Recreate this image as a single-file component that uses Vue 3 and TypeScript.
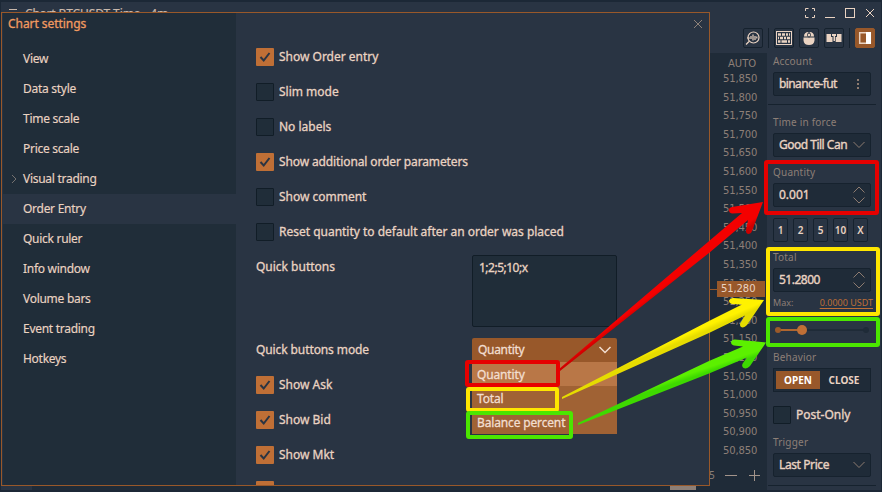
<script setup lang="ts">
type Row = { label: string; on: boolean }
const menu: string[] = ['View', 'Data style', 'Time scale', 'Price scale', 'Visual trading', 'Order Entry', 'Quick ruler', 'Info window', 'Volume bars', 'Event trading', 'Hotkeys']
const first: Row[] = [
  { label: 'Show Order entry', on: true },
  { label: 'Slim mode', on: false },
  { label: 'No labels', on: false },
  { label: 'Show additional order parameters', on: true },
  { label: 'Show comment', on: false },
  { label: 'Reset quantity to default after an order was placed', on: false },
]
const last: Row[] = [
  { label: 'Show Ask', on: true },
  { label: 'Show Bid', on: true },
  { label: 'Show Mkt', on: true },
  { label: '', on: true },
]
const options: string[] = ['Quantity', 'Total', 'Balance percent']
const prices: string[] = Array.from({ length: 21 }, (_, i) => (51850 - i * 50).toLocaleString('en-US'))
const quick: string[] = ['1', '2', '5', '10', 'X']
</script>

<template>
  <div class="window">
    <header class="titlebar">
      <div class="title"><span class="burger"></span>Chart BTCUSDT Time - 4m</div>
      <svg class="winbtns" width="76" height="14" viewBox="0 0 76 14" fill="none" stroke="#ead3c2" stroke-width="1">
        <path d="M1.500 5V2.500H4.500M8 2.500H10.500V5M10.500 9V11.500H8M4.500 11.500H1.500V9" />
        <path d="M21 11.500H31" /><rect x="41.500" y="2.500" width="9" height="9" />
        <path d="M62 3L70 11M70 3L62 11" />
      </svg>
    </header>
    <div class="body">
      <section class="chart">
        <div class="tools">
          <span class="tool"><svg width="18" height="18" viewBox="0 0 18 18" fill="none" stroke="#ead3c2" stroke-width="1.200"><circle cx="9.500" cy="8.500" r="5.500" /><path d="M5 12.500L2 15.500M7 7V10M9 5.500V11.500M11 7V11M12.800 7.500V9.500M3 9H6" /></svg></span>
          <i class="sep"></i>
          <span class="tool"><svg width="18" height="18" viewBox="0 0 18 18"><rect x="1.500" y="2.500" width="15" height="13" fill="none" stroke="#ead3c2" /><path d="M3 5.500H15M3 9H15M3 12.500H15" stroke="#ead3c2" stroke-width="2.500" /><path d="M6.500 4V7M10.500 4V7M13.500 4V7M4.500 7.500V11M8.500 7.500V11M11.500 7.500V11M6 11V14M12.500 11V14" stroke="#293443" /></svg></span>
          <span class="tool gap"><svg width="18" height="18" viewBox="0 0 18 18" fill="#ead3c2"><path d="M4 7.500Q4 3 8.500 3V7.500ZM9.500 7.500V3Q14 3 14 7.500ZM3.500 8.500H14.500V11.500Q14 16 9 16T3.500 11.500Z" /><rect x="7.500" y="4" width="3" height="4" rx="1.500" stroke="#293443" /></svg></span>
          <span class="tool gap"><svg width="18" height="18" viewBox="0 0 18 18" fill="#ead3c2"><path d="M1.500 5H6V8H7.500V13H1.500ZM7 5H11V7H10V12H8.500V7H7ZM12 5H16.500V13H10.700V8H12Z" /></svg></span>
          <i class="sep"></i>
          <span class="tool active"><svg width="18" height="18" viewBox="0 0 18 18"><path d="M3.700 3.700H14.300V14.300H3.700Z" fill="none" stroke="#ead3c2" stroke-width="1.500" /><path d="M10 3H15V15H10Z" fill="#fff" /></svg></span>
        </div>
        <div class="axis">
          <div class="auto">AUTO</div>
          <div class="prices"><span v-for="p in prices" :key="p">{{ p }}</span></div>
        </div>
        <div class="zoomer">
          <span class="clip">5</span>
          <svg width="42" height="14" viewBox="0 0 42 14" stroke="#a3948b" fill="none"><path d="M2 7.500H14M26 7.500H37M31.500 2V13" /></svg>
        </div>
        <i class="tick"></i>
        <div class="mark">51,280</div>
        <i class="foot"></i><i class="scroll"></i><i class="tab"></i>
      </section>
      <aside class="order">
        <label class="l-account">Account</label>
        <div class="field"><span class="t-acc">binance-fut</span><svg width="20" height="16" viewBox="0 0 20 16" fill="#8d7b70"><path d="M7 3h2v2h-2zM7 7h2v2h-2zM7 11h2v2h-2z" /></svg></div>
        <i class="rule"></i>
        <label class="l-tif">Time in force</label>
        <div class="field"><span class="t-good">Good Till Can</span><svg width="20" height="12" viewBox="0 0 20 12" fill="none" stroke="#8d7b70"><path d="M3.500 3L9 8.500L14.500 3" /></svg></div>
        <label class="l-qty">Quantity</label>
        <div class="field"><span>0.001</span><svg width="20" height="18" viewBox="0 0 20 18" fill="none" stroke="#8d7b70"><path d="M3.500 6.500L9 1L14.500 6.500M3.500 11.500L9 17L14.500 11.500" /></svg></div>
        <div class="quick"><b v-for="q in quick" :key="q">{{ q }}</b></div>
        <label class="l-total">Total</label>
        <div class="field"><span class="t-total">51.2800</span><svg width="20" height="18" viewBox="0 0 20 18" fill="none" stroke="#8d7b70"><path d="M3.500 6.500L9 1L14.500 6.500M3.500 11.500L9 17L14.500 11.500" /></svg></div>
        <div class="max"><span>Max:</span><u>0.0000 USDT</u></div>
        <svg class="slider" width="98" height="14" viewBox="0 0 98 14"><path d="M5 7H93" stroke="#1f2b38" stroke-width="2" /><path d="M5 7H29" stroke="#b0662f" stroke-width="2" /><circle cx="5" cy="7" r="3" fill="#9b5a2a" /><circle cx="93" cy="7" r="3" fill="#1f2b38" /><circle cx="29" cy="7" r="5" fill="#bf6f36" /></svg>
        <label class="l-beh">Behavior</label>
        <div class="toggle"><b class="sel">OPEN</b><b>CLOSE</b></div>
        <div class="post"><i class="box"></i><span>Post-Only</span></div>
        <label class="l-trig">Trigger</label>
        <div class="field"><span class="t-last">Last Price</span><svg width="20" height="12" viewBox="0 0 20 12" fill="none" stroke="#8d7b70"><path d="M3.500 3L9 8.500L14.500 3" /></svg></div>
        <i class="rule"></i>
      </aside>
    </div>

    <div class="dialog">
      <nav>
        <h1>Chart settings</h1>
        <div v-for="m in menu" :key="m" class="item" :class="{ current: m === 'Order Entry' }">
          <svg v-if="m === 'Visual trading'" class="chev" width="8" height="10" viewBox="0 0 8 10" fill="none" stroke="#75716f"><path d="M2 1L6 5L2 9" /></svg>
          <span>{{ m }}</span>
        </div>
      </nav>
      <main>
        <svg class="close" width="10" height="10" viewBox="0 0 10 10" stroke="#8d8179"><path d="M1 1L9 9M9 1L1 9" /></svg>
        <div v-for="r in first" :key="r.label" class="check"><i class="box" :class="{ on: r.on }"><svg v-if="r.on" width="18" height="18" viewBox="0 0 18 18" fill="none" stroke="#293443" stroke-width="2"><path d="M4.500 9L7.700 12.500L13.500 5" /></svg></i><span>{{ r.label }}</span></div>
        <div class="pair area"><span>Quick buttons</span><div class="textarea">1;2;5;10;x</div></div>
        <div class="pair mode"><span>Quick buttons mode</span>
          <div class="select">Quantity<svg width="14" height="10" viewBox="0 0 14 10" fill="none" stroke="#f2ded0" stroke-width="1.500"><path d="M1.500 2L7 7.500L12.500 2" /></svg>
            <div class="drop"><span v-for="o in options" :key="o">{{ o }}</span></div>
          </div>
        </div>
        <div v-for="r in last" :key="r.label" class="check"><i class="box" :class="{ on: r.on }"><svg v-if="r.on" width="18" height="18" viewBox="0 0 18 18" fill="none" stroke="#293443" stroke-width="2"><path d="M4.500 9L7.700 12.500L13.500 5" /></svg></i><span>{{ r.label }}</span></div>
      </main>
    </div>

    <svg class="notes" width="882" height="492" viewBox="0 0 882 492" fill="none">
      <defs>
        <linearGradient id="gr" gradientUnits="userSpaceOnUse" x1="650" y1="289" x2="659" y2="301"><stop offset=".4" stop-color="#f40000" /><stop offset=".7" stop-color="#ce0000" /></linearGradient>
        <linearGradient id="gy" gradientUnits="userSpaceOnUse" x1="658" y1="340" x2="664" y2="354"><stop offset=".4" stop-color="#fff200" /><stop offset=".7" stop-color="#e6dc00" /></linearGradient>
        <linearGradient id="gg" gradientUnits="userSpaceOnUse" x1="668" y1="374" x2="673" y2="389"><stop offset=".4" stop-color="#5cf000" /><stop offset=".7" stop-color="#3ed900" /></linearGradient>
      </defs>
      <path d="M559 369L742 213L732 213.500Q729 213 729 210Q729 207.500 732 207L763 202L752 231Q751 234 748 234Q745.500 233 746 230L748 220L709 253L560 371Z" fill="url(#gr)" />
      <path d="M562 397L709 321L742 304.500L732 304Q729 303 729 300.500Q730 298 733 298L764 300L747 325Q744 328.500 741 327Q739 325 741 322L745 315.500L709 333L562 399Z" fill="url(#gy)" />
      <path d="M578 423L709 361L743 346.500L734 345.500Q731 344.500 731 342Q732 339 735 339.500L766 342.500L750 366Q747 369.500 743.500 368Q741 366 743 363L747 357.500L709 373.500L578 425Z" fill="url(#gg)" />
      <rect x="467" y="362" width="91" height="23" rx="1" stroke="#e60000" stroke-width="4" />
      <rect x="468" y="389" width="89" height="21" rx="1" stroke="#ffe600" stroke-width="4" />
      <rect x="468" y="413" width="103" height="24" rx="1" stroke="#4be600" stroke-width="4" />
      <rect x="766" y="162" width="111" height="51" rx="1" stroke="#e60000" stroke-width="4" />
      <rect x="768" y="249" width="110" height="65" rx="1" stroke="#ffe600" stroke-width="4" />
      <rect x="768" y="319" width="110" height="26" rx="1" stroke="#4be600" stroke-width="4" />
    </svg>
  </div>
</template>

<style>
body { margin: 0; background: #fff; overflow: hidden; }
</style>
<style scoped>
* { box-sizing: border-box; }
i { display: block; font-style: normal; flex: none; }
svg { display: block; flex: none; }
.window { position: relative; width: 882px; height: 492px; overflow: hidden; background: #1c2836; padding: 2px 1px 2px 1px; font: 12px/16px "Noto Sans", sans-serif; color: #ead3c2; }
.titlebar { display: flex; justify-content: space-between; height: 24px; background: #293443; padding: 4px 1px 0 8px; }
.title { display: flex; gap: 8px; font-size: 12px; color: #c9b8ab; height: 20px; letter-spacing: -.1px; -webkit-text-stroke: .2px; }
.burger { width: 8px; height: 8px; margin-top: 3px; border-top: 1px solid #c9b8ab; border-bottom: 1px solid #c9b8ab; }
.body { display: flex; height: 464px; background: #293443; }
.chart { position: relative; width: 766px; height: 464px; display: flex; flex-direction: column; align-items: flex-end; flex: none; }
.tools { display: flex; align-items: center; width: 138px; margin-right: -114px; margin-bottom: 3px; height: 24px; flex: none; position: relative; z-index: 1; }
.tool { width: 20px; height: 20px; display: grid; place-items: center; border: 1px solid #16222e; border-radius: 2px; background: #293443; }
.tool.active { background: #98582a; border-color: #98582a; }
.sep { width: 1px; height: 20px; background: #16222e; margin: 0 5px; }
.gap { margin-left: 5px; }
.axis { width: 58px; height: 407px; background: #1f2b38; font: 10px/18.600px "DejaVu Sans", sans-serif; color: #8d7f77; flex: none; }
.auto { height: 17px; line-height: 22px; padding-left: 19px; }
.prices { display: flex; flex-direction: column; padding-left: 14px; letter-spacing: -.15px; }
.prices span { height: 18.600px; }
.zoomer { width: 58px; height: 30px; display: flex; align-items: center; background: #1f2b38; }
.clip { width: 14px; font-size: 10px; color: #8d7f77; }
.tick { position: absolute; left: 708px; top: 263px; width: 9px; height: 1px; background: #98582a; }
.mark { position: absolute; left: 716px; top: 255px; width: 48px; height: 16px; padding-left: 4px; background: #98582a; font: 10px/16px "DejaVu Sans", sans-serif; letter-spacing: -.1px; }
.foot { position: absolute; left: 0; top: 460px; width: 710px; height: 4px; background: #1f2b38; }
.scroll { position: absolute; left: 669px; top: 460px; width: 26px; height: 4px; background: #8d7f77; }
.tab { position: absolute; left: 0; top: 460px; width: 31px; height: 4px; background: #293443; }
.order { width: 114px; height: 464px; padding: 0 8px 0 6px; display: flex; flex-direction: column; flex: none; }
.order label { font-size: 10px; line-height: 13px; color: #8d7f77; height: 14px; flex: none; letter-spacing: .2px; }
.field { width: 98px; height: 24px; display: flex; align-items: center; justify-content: space-between; border: 1px solid #16222e; border-radius: 2px; background: #1f2b38; padding: 0 0 0 5px; flex: none; white-space: nowrap; font-size: 12px; -webkit-text-stroke: .35px; }
.t-acc { letter-spacing: -.6px; }
.t-good { letter-spacing: -.5px; }
.t-total { letter-spacing: -.5px; }
.t-last { letter-spacing: -.4px; }
.l-account { margin: 29px 0 3px; }
.rule { width: 108px; height: 1px; margin-left: -5px; background: #16222e; margin-top: 8px; }
.l-tif { margin: 11px 0 3px; }
.l-qty { margin: 9px 0 3px; }
.quick { display: flex; gap: 5px; margin-top: 11px; height: 24px; flex: none; }
.quick b { width: 15px; display: grid; place-items: center; border: 1px solid #16222e; border-radius: 2px; font-size: 10px; font-weight: 600; }
.l-total { margin: 9px 0 3px; }
.max { display: flex; justify-content: space-between; font-size: 9px; line-height: 14px; margin-top: 4px; height: 14px; color: #8d7f77; flex: none; }
.max u { color: #bf6f36; text-underline-offset: 2px; }
.slider { margin-top: 13px; }
.l-beh { margin: 14px 0 3px; }
.toggle { display: flex; height: 24px; padding: 2px; border: 1px solid #16222e; background: #1f2b38; font-size: 10px; flex: none; width: 98px; }
.toggle b { flex: 1; display: grid; place-items: center; font-weight: 700; }
.toggle .sel { background: #98582a; color: #fff; flex: none; width: 44px; }
.post { display: flex; gap: 5px; align-items: center; margin-top: 14px; height: 18px; flex: none; -webkit-text-stroke: .35px; }
.l-trig { margin: 12px 0 3px; }
.box { width: 18px; height: 18px; border: 1px solid #111d27; border-radius: 1px; background: #202d39; }
.box.on { background: #bf6f36; border: 0; }

.dialog { position: absolute; left: 1px; top: 12px; width: 709px; height: 474px; border: 1px solid #98582a; background: #293443; display: flex; overflow: hidden; }
nav { width: 234px; height: 472px; background: #202d39; border-left: 1px solid #293443; flex: none; }
h1 { margin: 0; padding: 3px 0 0 5px; height: 31px; font: 12px/16px "Noto Sans", sans-serif; color: #f29a60; -webkit-text-stroke: .3px; letter-spacing: -.05px; }
.item { position: relative; height: 30px; line-height: 30px; padding-left: 20px; white-space: nowrap; font-size: 12px; letter-spacing: -.28px; -webkit-text-stroke: .15px; }
.current { background: #293443; }
.chev { position: absolute; left: 7px; top: 10px; }
main { position: relative; width: 473px; padding: 34px 0 0 20px; -webkit-text-stroke: .3px; letter-spacing: -.01px; }
.check:nth-of-type(4) { letter-spacing: -.12px; }
.close { position: absolute; right: 6px; top: 6px; }
.check { display: flex; gap: 5px; align-items: center; height: 20px; margin-bottom: 15px; white-space: nowrap; }
.pair { display: flex; }
.pair > span { width: 216px; flex: none; }
.area { height: 83px; margin-top: -2px; }
.area > span { padding-top: 4px; }
.textarea { width: 145px; height: 72px; border: 1px solid #111d27; background: #202d39; border-radius: 2px; padding: 4px 6px; letter-spacing: -.5px; }
.mode { height: 37px; }
.mode > span { padding-top: 4px; letter-spacing: -.1px; }
.select { position: relative; display: flex; justify-content: space-between; align-items: center; width: 145px; height: 24px; padding: 0 5px 0 6px; background: #98582a; color: #f2ded0; letter-spacing: -.3px; border-radius: 2px 2px 0 0; }
.drop { position: absolute; left: 0; top: 24px; width: 145px; height: 72px; background: #a06234; z-index: 1; letter-spacing: -.15px; }
.drop span { display: block; height: 24px; line-height: 25px; padding-left: 5px; }
.drop span:first-child { background: #b97747; }
.notes { position: absolute; left: 0; top: 0; z-index: 5; }
</style>
